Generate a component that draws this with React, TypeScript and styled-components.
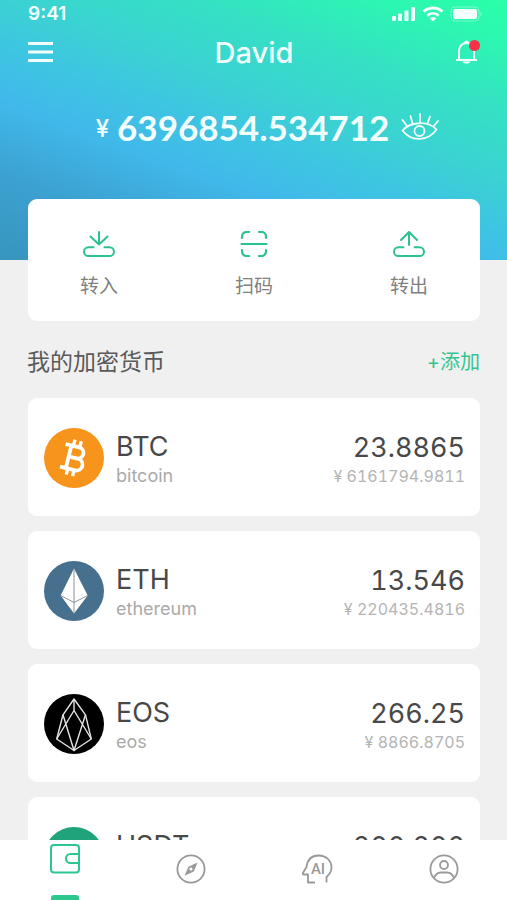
import React from "react";
import styled, { createGlobalStyle } from "styled-components";

const GlobalStyle = createGlobalStyle`
  *, *::before, *::after { box-sizing: border-box; }
  body {
    margin: 0;
    background: #f0f0f0;
    font-family: Inter, "Noto Sans CJK SC", sans-serif;
    color: #444;
  }
  button {
    border: 0;
    padding: 0;
    background: none;
    color: inherit;
    font: inherit;
    cursor: pointer;
  }
  h1, h2, h3, p, ul { margin: 0; padding: 0; font-weight: 400; }
  ul { list-style: none; }
  svg { display: block; }
`;

const Screen = styled.div`
  display: flex;
  flex-direction: column;
  height: 100vh;
`;

const Content = styled.main`
  flex: 1;
  min-height: 0;
  overflow-y: auto;
  scrollbar-width: none;
`;

const Hero = styled.header`
  padding: 0 28px 111px;
  color: #f2fffd;
  background: linear-gradient(200deg, #29ffa8 0%, #2cf8b0 9%, #35e0c4 26%, #3bd2d3 41%, #3ec5e2 52%, #40b9ea 64%, #3ca2d2 80%, #3795bd 100%);
`;

const StatusBar = styled.div`
  display: flex;
  align-items: center;
  justify-content: space-between;
  height: 27px;
`;

const Clock = styled.span`
  font-size: 19px;
  line-height: 24px;
  font-weight: 600;
`;

const StatusIcons = styled.div`
  display: flex;
  align-items: center;
  gap: 6px;
  margin-right: -4px;
`;

const TitleBar = styled.div`
  display: flex;
  align-items: center;
  justify-content: space-between;
  height: 50px;
`;

const Title = styled.h1`
  padding-top: 1px;
  font-size: 29px;
  line-height: 36px;
  font-weight: 500;
`;

const BellButton = styled.button`
  position: relative;
  margin-right: -1px;
`;

const BellDot = styled.span`
  position: absolute;
  top: 0;
  right: 0;
  width: 11px;
  height: 11px;
  border-radius: 50%;
  background: #f5334a;
`;

const Balance = styled.div`
  display: flex;
  align-items: center;
  justify-content: center;
  height: 44px;
  margin-top: 28px;
  padding-left: 28px;
`;

const BalanceSign = styled.span`
  margin: 4px 8px 0 0;
  font-size: 24px;
  line-height: 32px;
  font-weight: 500;
`;

const BalanceValue = styled.span`
  margin-right: 12px;
  font-family: Lato, sans-serif;
  font-size: 35px;
  line-height: 44px;
  font-weight: 700;
`;

const Actions = styled.section`
  display: flex;
  align-items: center;
  justify-content: space-between;
  height: 122px;
  margin: -61px 27px 0 28px;
  padding: 11px 51px 0;
  border-radius: 9px;
  background: #fff;
`;

const ActionButton = styled.button`
  display: flex;
  flex-direction: column;
  align-items: center;
  gap: 17px;
  width: 40px;
  color: #2cc28e;
`;

const ActionLabel = styled.span`
  font-size: 19px;
  line-height: 26px;
  color: #808080;
  white-space: nowrap;
`;

const SectionHead = styled.div`
  display: flex;
  align-items: center;
  justify-content: space-between;
  height: 77px;
  padding: 4px 27px 0;
`;

const SectionTitle = styled.h2`
  font-size: 23px;
  line-height: 32px;
  color: #5a5a5a;
`;

const AddButton = styled.button`
  font-size: 20px;
  line-height: 28px;
  color: #34c592;
`;

const CoinList = styled.ul`
  display: flex;
  flex-direction: column;
  gap: 15px;
  padding: 0 27px 16px 28px;
`;

const CoinCard = styled.li`
  display: flex;
  align-items: center;
  gap: 12px;
  height: 118px;
  padding: 2px 15px 0 16px;
  border-radius: 9px;
  background: #fff;
`;

const CoinBadge = styled.span<{ $color: string }>`
  flex: none;
  width: 60px;
  height: 60px;
  border-radius: 50%;
  overflow: hidden;
  background: ${(p) => p.$color};
`;

const CoinText = styled.div<{ $end?: boolean }>`
  flex: ${(p) => (p.$end ? "none" : 1)};
  min-width: 0;
  padding-top: 4px;
  text-align: ${(p) => (p.$end ? "right" : "left")};
  font-variant-numeric: tabular-nums;
`;

const CoinSymbol = styled.h3`
  font-size: 27px;
  line-height: 32px;
  color: #484848;
`;

const CoinName = styled.p`
  font-size: 18px;
  line-height: 26px;
  color: #aaa;
`;

const CoinAmount = styled.p`
  padding-top: 1px;
  font-size: 27px;
  line-height: 32px;
  color: #484848;
`;

const CoinFiat = styled.p`
  font-size: 16px;
  line-height: 25px;
  color: #b4b4b4;
`;

const TabBar = styled.nav`
  flex: none;
  display: grid;
  grid-template-columns: repeat(4, 1fr);
  height: 60px;
  background: #fff;
`;

const Tab = styled.button<{ $active?: boolean }>`
  display: flex;
  flex-direction: column;
  align-items: center;
  justify-content: ${(p) => (p.$active ? "space-between" : "center")};
  padding: ${(p) => (p.$active ? "4px 0 0 3px" : "0 0 3px 1px")};
  color: ${(p) => (p.$active ? "#2cc78f" : "#999")};
`;

const TabMarker = styled.span`
  width: 28px;
  height: 5px;
  border-radius: 3px 3px 0 0;
  background: #2cc78f;
`;

const SignalIcon = () => (
  <svg width="24" height="16" viewBox="0 0 24 16" fill="currentColor" aria-hidden="true">
    <rect x="0" y="10" width="4" height="5" rx="1" />
    <rect x="6" y="7.500" width="4" height="7.500" rx="1" />
    <rect x="12.500" y="4.500" width="4" height="10.500" rx="1" />
    <rect x="19" y="1" width="4" height="14" rx="1" />
  </svg>
);

const WifiIcon = () => (
  <svg width="22" height="16" viewBox="0 0 22 16" fill="none" stroke="currentColor" strokeWidth="2.800" aria-hidden="true">
    <path d="M1.500 5.600C7 .8 15 .8 20.500 5.600" />
    <path d="M5.200 9.600c3.500-3 8.100-3 11.600 0" />
    <path d="M7.600 12.200c2-1.700 4.800-1.700 6.800 0L11 15.500z" fill="currentColor" stroke="none" />
  </svg>
);

const BatteryIcon = () => (
  <svg width="33" height="16" viewBox="0 0 33 16" aria-hidden="true">
    <rect x="1" y="1" width="28" height="14" rx="4" fill="none" stroke="currentColor" strokeOpacity=".4" />
    <rect x="3" y="3" width="24" height="10" rx="2" fill="currentColor" />
    <path d="M30.500 5.500c1.500.8 1.500 4.200 0 5z" fill="currentColor" fillOpacity=".45" />
  </svg>
);

const MenuIcon = () => (
  <svg width="25" height="22" viewBox="0 0 25 22" stroke="currentColor" strokeWidth="3" aria-hidden="true">
    <path d="M0 2.500h25M0 11h25M0 19.500h25" />
  </svg>
);

const BellIcon = () => (
  <svg width="25" height="24" viewBox="0 0 25 24" fill="none" stroke="currentColor" strokeWidth="2" aria-hidden="true">
    <path d="M1 20h21M4 20v-9.500a7.500 7.500 0 0 1 15 0V20" />
    <path d="M9 3a2.500 2.500 0 0 1 5 0M7.500 21.500c1 2.700 7 2.700 8 0z" fill="currentColor" stroke="none" />
  </svg>
);

const EyeIcon = () => (
  <svg width="38" height="28" viewBox="0 0 38 28" fill="none" stroke="currentColor" strokeWidth="1.800" strokeLinecap="round" strokeLinejoin="round" aria-hidden="true">
    <path d="M1.500 17.500C9.500 8.500 27 7.500 35.500 16.500 27 28.500 10 29 1.500 17.500z" />
    <circle cx="18.500" cy="18" r="5" />
    <path d="M6 13 1.500 7M11.500 10.500 9.500 3M19 9.500V1M26.500 10.500 29 3.500M32.500 13.500 37 8" />
  </svg>
);

const TRAY = "M10.500 16.300H5.400a4.350 4.350 0 0 0 0 8.700h21.200a4.350 4.350 0 0 0 0-8.700h-5.100";

const TransferIcon = ({ arrow }: { arrow: string }) => (
  <svg width="32" height="26" viewBox="0 0 32 26" fill="none" stroke="currentColor" strokeWidth="2" strokeLinecap="round" strokeLinejoin="round" aria-hidden="true">
    <path d={arrow} />
    <path d={TRAY} />
  </svg>
);

const ScanIcon = () => (
  <svg width="28" height="26" viewBox="0 0 28 26" fill="none" stroke="currentColor" strokeWidth="2.200" strokeLinecap="round" aria-hidden="true">
    <path d="M1.500 13h25M2 7V5.500A4.500 4.500 0 0 1 6.500 1H9M19 1h2.500A4.500 4.500 0 0 1 26 5.500V7M26 19v1.500a4.500 4.500 0 0 1-4.500 4.500H19M9 25H6.500A4.500 4.500 0 0 1 2 20.500V19" />
  </svg>
);

const BitcoinIcon = () => (
  <svg width="60" height="60" viewBox="0 0 60 60" fill="none" stroke="#fff" strokeWidth="3.800" aria-hidden="true">
    <g transform="rotate(14 30 30)">
      <path d="M18.500 18.500H32.500a5.600 5.600 0 0 1 0 11.200H25M32.500 29.700h1.500a6 6 0 0 1 0 12H18.500M24.500 18.500v23" />
      <path d="M26.500 12v6M33 12v6M26.500 42v6M33 42v6" strokeWidth="3.400" />
    </g>
  </svg>
);

const EthIcon = () => (
  <svg width="60" height="60" viewBox="0 0 60 60" aria-hidden="true">
    <path d="M30 7.500 43.700 34.500 30 52.500 16.700 34.500z" fill="#fff" />
    <path d="M30 8v44M16.700 34.500 30 41.500l13.700-7" fill="none" stroke="#8d9398" strokeWidth="1" />
  </svg>
);

const EosIcon = () => (
  <svg width="60" height="60" viewBox="0 0 60 60" fill="none" stroke="#e4e4e4" strokeWidth="1.400" strokeLinejoin="round" aria-hidden="true">
    <path d="M30 5 19 20.800 12.700 45 30 56.500 47.300 45 41.500 20.800z" />
    <path d="M30 5v11.500M12.700 45 30 16.500 47.300 45M19 20.800l11 35.700 11.500-35.700" />
  </svg>
);

const TetherIcon = () => (
  <svg width="60" height="60" viewBox="0 0 60 60" fill="none" stroke="#fff" aria-hidden="true">
    <path d="M16 18h28M30 18v30" strokeWidth="6" />
    <ellipse cx="30" cy="29" rx="18" ry="4" strokeWidth="2" />
  </svg>
);

const WalletIcon = () => (
  <svg width="30" height="30" viewBox="0 0 30 30" fill="none" stroke="currentColor" strokeWidth="2" aria-hidden="true">
    <rect x="1" y="1" width="28" height="27.500" rx="3" />
    <path d="M29 10H20.500a4.500 4.500 0 0 0 0 9H29z" />
  </svg>
);

const CompassIcon = () => (
  <svg width="30" height="30" viewBox="0 0 30 30" fill="none" stroke="currentColor" aria-hidden="true">
    <circle cx="15" cy="15" r="13.600" strokeWidth="1.800" />
    <path d="M21.500 8.500 17.800 17.500 8.500 21.800 12.400 12.700z" fill="currentColor" stroke="none" />
    <circle cx="15" cy="15" r="1.600" fill="#fff" stroke="none" />
  </svg>
);

const AiIcon = () => (
  <svg width="32" height="30" viewBox="0 0 32 30" fill="none" stroke="currentColor" strokeWidth="1.800" strokeLinejoin="round" aria-hidden="true">
    <path d="M14 28.500H7V20.500H2.800c-1-.2-1.300-1-.8-1.800L5.500 13C6.500 5.500 11 1.500 17.500 1.500 25 1.500 30.500 6.500 30.500 13.500c0 4-1.500 6.500-5 9.500v5.500" />
    <text x="17" y="20" textAnchor="middle" fontSize="15" fontWeight="500" fontFamily="Roboto, sans-serif" fill="currentColor" stroke="none">AI</text>
  </svg>
);

const ProfileIcon = () => (
  <svg width="30" height="30" viewBox="0 0 30 30" fill="none" stroke="currentColor" strokeWidth="1.800" aria-hidden="true">
    <circle cx="15" cy="15" r="13.600" />
    <circle cx="15" cy="11" r="4" />
    <path d="M5 24c1.500-4 4.500-5.500 7-5.500h6c2.500 0 5.500 1.500 7 5.500" />
  </svg>
);

const ACTIONS = [
  { label: "转入", icon: <TransferIcon arrow="M16 1v12.500M7.500 5.500 16 13.500l8.500-8" /> },
  { label: "扫码", icon: <ScanIcon /> },
  { label: "转出", icon: <TransferIcon arrow="M16 14V1M8 9l8-8 8 8" /> },
];

const COINS = [
  { symbol: "BTC", name: "bitcoin", amount: "23.8865", fiat: "6161794.9811", color: "#f7941c", icon: <BitcoinIcon /> },
  { symbol: "ETH", name: "ethereum", amount: "13.546", fiat: "220435.4816", color: "#47708f", icon: <EthIcon /> },
  { symbol: "EOS", name: "eos", amount: "266.25", fiat: "8866.8705", color: "#000", icon: <EosIcon /> },
  { symbol: "USDT", name: "tether", amount: "200.200", fiat: "1401.4000", color: "#20a37b", icon: <TetherIcon /> },
];

export default function App() {
  return (
    <Screen>
      <GlobalStyle />
      <Content>
        <Hero>
          <StatusBar>
            <Clock>9:41</Clock>
            <StatusIcons>
              <SignalIcon />
              <WifiIcon />
              <BatteryIcon />
            </StatusIcons>
          </StatusBar>
          <TitleBar>
            <button type="button" aria-label="菜单"><MenuIcon /></button>
            <Title>David</Title>
            <BellButton type="button" aria-label="通知">
              <BellIcon />
              <BellDot />
            </BellButton>
          </TitleBar>
          <Balance>
            <BalanceSign>¥</BalanceSign>
            <BalanceValue>6396854.534712</BalanceValue>
            <button type="button" aria-label="隐藏余额"><EyeIcon /></button>
          </Balance>
        </Hero>
        <Actions>
          {ACTIONS.map((a) => (
            <ActionButton type="button" key={a.label}>
              {a.icon}
              <ActionLabel>{a.label}</ActionLabel>
            </ActionButton>
          ))}
        </Actions>
        <SectionHead>
          <SectionTitle>我的加密货币</SectionTitle>
          <AddButton type="button">+添加</AddButton>
        </SectionHead>
        <CoinList>
          {COINS.map((c) => (
            <CoinCard key={c.symbol}>
              <CoinBadge $color={c.color}>{c.icon}</CoinBadge>
              <CoinText>
                <CoinSymbol>{c.symbol}</CoinSymbol>
                <CoinName>{c.name}</CoinName>
              </CoinText>
              <CoinText $end>
                <CoinAmount>{c.amount}</CoinAmount>
                <CoinFiat>¥ {c.fiat}</CoinFiat>
              </CoinText>
            </CoinCard>
          ))}
        </CoinList>
      </Content>
      <TabBar>
        <Tab type="button" $active aria-label="钱包" aria-current="page">
          <WalletIcon />
          <TabMarker />
        </Tab>
        <Tab type="button" aria-label="发现"><CompassIcon /></Tab>
        <Tab type="button" aria-label="AI"><AiIcon /></Tab>
        <Tab type="button" aria-label="我的"><ProfileIcon /></Tab>
      </TabBar>
    </Screen>
  );
}
